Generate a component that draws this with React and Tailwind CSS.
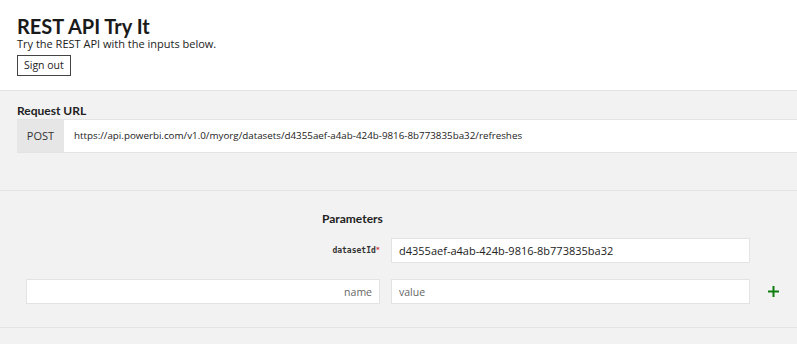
export default function App() {
  return (
    <div className="w-[797px] h-[344px] overflow-hidden bg-[#f2f2f2] text-[#222] font-['Segoe_UI','Open_Sans',sans-serif]">
      {/* Header */}
      <header className="bg-white px-[17px] pt-[15px] h-[91px] border-b border-[#e3e3e3]">
        <h1 className="font-['Lato',sans-serif] text-[20px] leading-[22px] font-bold text-[#1a1a1a]">REST API Try It</h1>
        <p className="text-[11px] leading-[14px] text-[#222]">Try the REST API with the inputs below.</p>
        <button className="h-[21px] px-[6px] border border-[#444] bg-white text-[10.5px] leading-none text-[#222]">
          Sign out
        </button>
      </header>

      {/* Request URL */}
      <section className="h-[100px] border-b border-[#e3e3e3] pt-[12px]">
        <div className="px-[17px] font-['Lato',sans-serif] text-[12px] leading-[15px] font-bold text-[#222]">Request URL</div>
        <div className="mt-[1px] ml-[17px] flex h-[34px] border-y border-[#e3e3e3] bg-white">
          <div className="w-[47px] bg-[#e6e6e6] flex items-center justify-center text-[11px] text-[#333]">POST</div>
          <div className="flex items-center pl-[10px] text-[9.8px] text-[#222]">
            https://api.powerbi.com/v1.0/myorg/datasets/d4355aef-a4ab-424b-9816-8b773835ba32/refreshes
          </div>
        </div>
      </section>

      {/* Parameters */}
      <section className="h-[137px] border-b border-[#e3e3e3] pt-[20px]">
        <div className="grid grid-cols-[354px_359px_1fr] gap-x-[11px] pl-[26px] items-center">
          <div />
          <div className="-ml-[69px] font-['Lato',sans-serif] text-[12px] leading-[16px] font-bold text-[#222]">Parameters</div>
          <div />
        </div>
        <div className="mt-[11px] grid grid-cols-[354px_359px_1fr] gap-x-[11px] gap-y-[16px] pl-[26px] items-center">
          <div className="text-right font-['DejaVu_Sans_Mono',monospace] font-bold text-[8px] text-[#333]">
            datasetId<span className="text-[#d13438] align-top text-[7px]">*</span>
          </div>
          <input
            readOnly
            value="d4355aef-a4ab-424b-9816-8b773835ba32"
            className="h-[25px] border border-[#e3e3e3] bg-white px-[7px] text-[11px] text-[#222] outline-none"
          />
          <div />
          <input
            readOnly
            placeholder="name"
            className="h-[25px] border border-[#e3e3e3] bg-white px-[7px] text-right text-[10.5px] text-[#222] placeholder:text-[#666] outline-none"
          />
          <input
            readOnly
            placeholder="value"
            className="h-[25px] border border-[#e3e3e3] bg-white px-[7px] text-[10.5px] text-[#222] placeholder:text-[#666] outline-none"
          />
          <div className="pl-[7px] flex items-center">
            <svg width="11" height="11" viewBox="0 0 11 11">
              <path d="M5.5 0v11M0 5.5h11" stroke="#107c10" strokeWidth="2" />
            </svg>
          </div>
        </div>
      </section>
    </div>
  );
}
